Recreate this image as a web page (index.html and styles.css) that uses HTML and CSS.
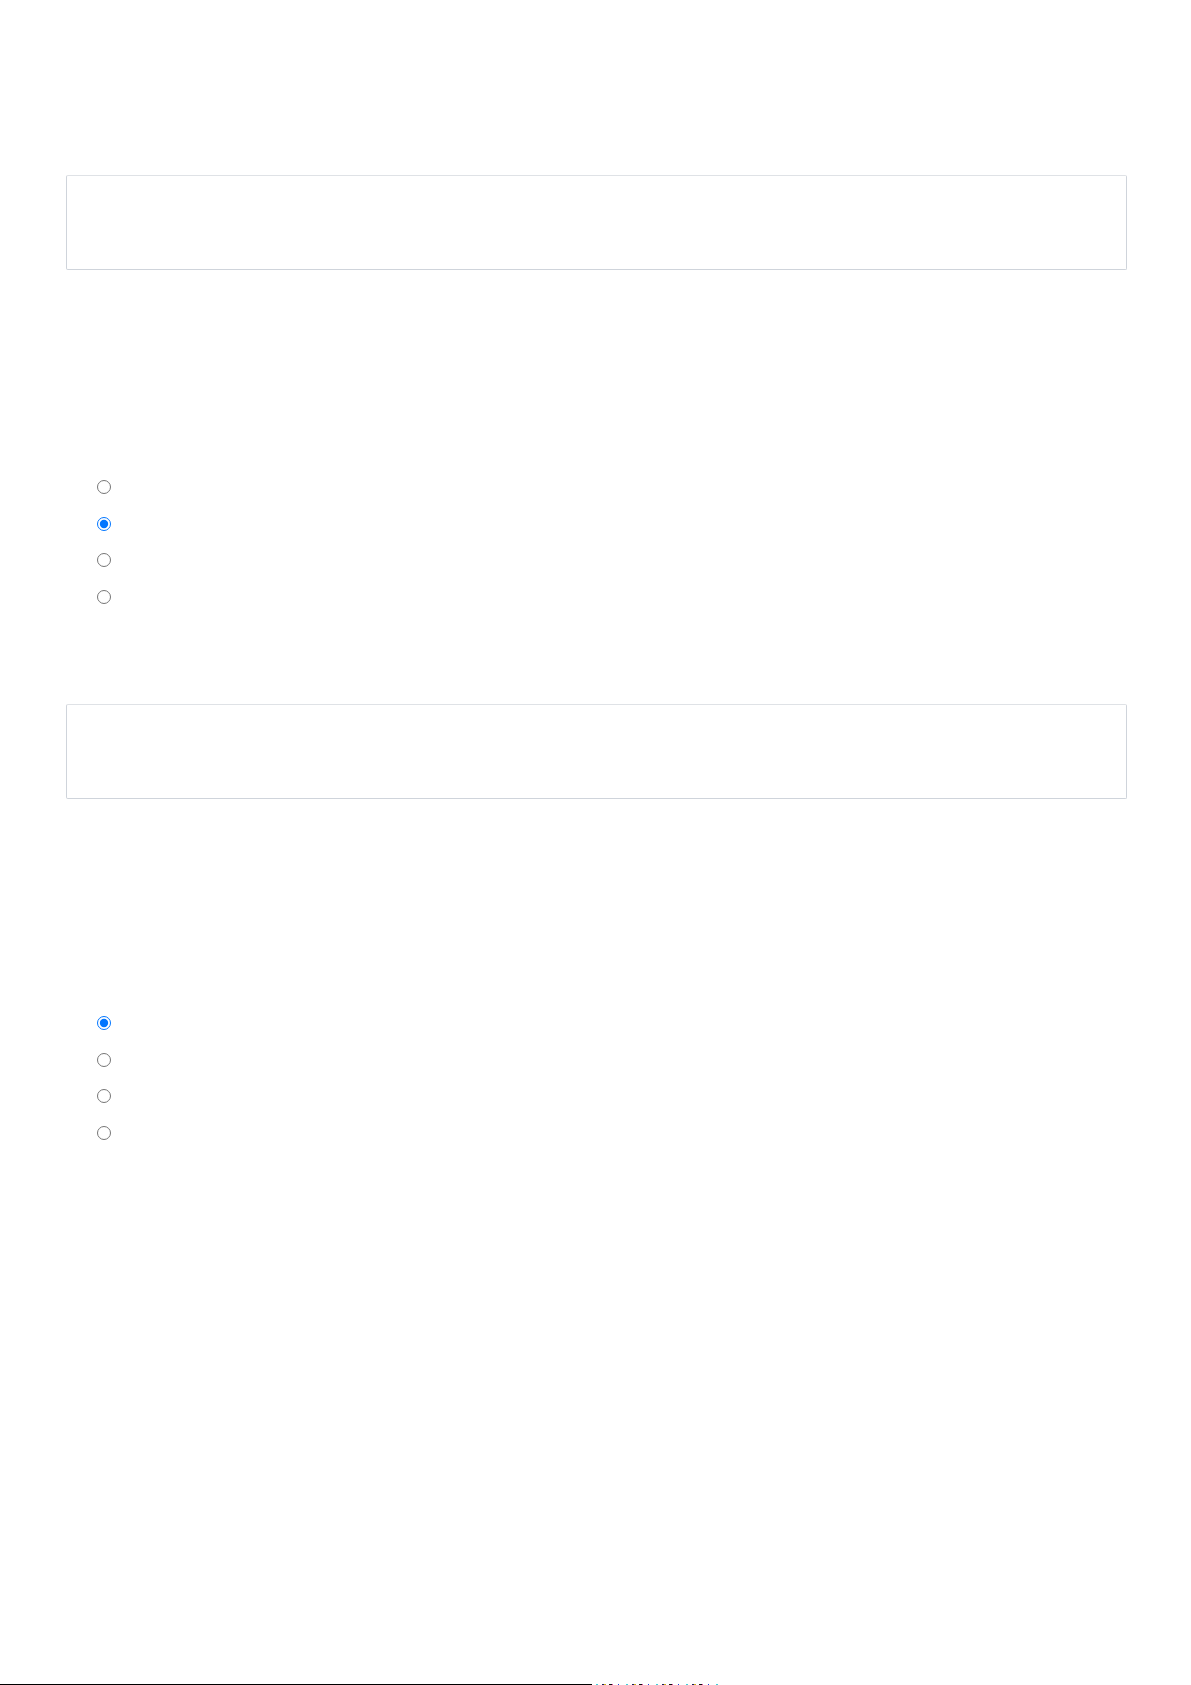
FILE: index.html
```html
<!DOCTYPE html>
<html lang="en">
<head>
<meta charset="utf-8">
<title>Form</title>
<link rel="stylesheet" href="styles.css">
</head>
<body>
<main class="page">
  <textarea class="field" aria-label="Answer 1"></textarea>
  <div class="choices choices-first">
    <label class="choice"><input type="radio" name="q1"></label>
    <label class="choice"><input type="radio" name="q1" checked></label>
    <label class="choice"><input type="radio" name="q1"></label>
    <label class="choice"><input type="radio" name="q1"></label>
  </div>
  <textarea class="field field-second" aria-label="Answer 2"></textarea>
  <div class="choices choices-second">
    <label class="choice"><input type="radio" name="q2" checked></label>
    <label class="choice"><input type="radio" name="q2"></label>
    <label class="choice"><input type="radio" name="q2"></label>
    <label class="choice"><input type="radio" name="q2"></label>
  </div>
  <div class="edge">
    <span class="edge-bar"></span>
    <span class="edge-noise"></span>
  </div>
</main>
</body>
</html>
```
FILE: styles.css
```css
html, body {
  margin: 0;
  padding: 0;
  background: #ffffff;
  font-family: "Liberation Sans", Arial, sans-serif;
}

.page {
  display: flex;
  flex-direction: column;
  padding: 175px 64px 0 66px;
}

.field {
  display: block;
  box-sizing: border-box;
  width: 100%;
  height: 95px;
  margin: 0;
  padding: 6px 12px;
  border: 1px solid #cfd4db;
  border-top-color: #dfe2e6;
  border-radius: 2px;
  background: #ffffff;
  resize: none;
  font: inherit;
}

.field-second {
  margin-top: 88.7px;
}

.choices {
  display: flex;
  flex-direction: column;
  padding-left: 30.5px;
}

.choices-first {
  margin-top: 198.7px;
}

.choices-second {
  margin-top: 205.7px;
}

.choice {
  display: flex;
  align-items: center;
  height: 36.67px;
}

.choice input {
  width: 14px;
  height: 14px;
  margin: 0;
}

.edge {
  display: flex;
  margin: 532.7px -64px 0 -66px;
  height: 1px;
}

.edge-bar {
  width: 592px;
  height: 1px;
  background: #000000;
}

.edge-noise {
  width: 124px;
  height: 1px;
  margin-left: 4px;
  background: repeating-linear-gradient(90deg,
    #3fd0d8 0 2px, #ffffff 2px 6px, #202060 6px 8px, #d0b020 8px 10px,
    #ffffff 10px 13px, #101010 13px 16px, #e040a0 16px 17px, #ffffff 17px 22px,
    #2040e0 22px 23px, #ffffff 23px 30px);
}
```
